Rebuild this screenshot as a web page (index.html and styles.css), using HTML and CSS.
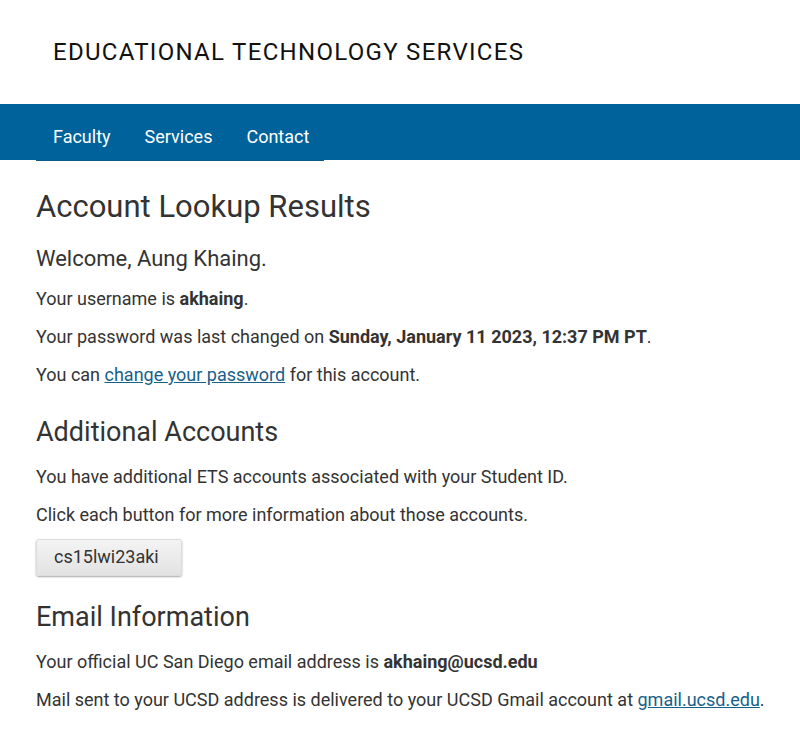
FILE: index.html
```html
<!DOCTYPE html>
<html>
<head>
<meta charset="utf-8">
<link rel="stylesheet" href="styles.css">
</head>
<body>
<header class="site-header">
  <div class="site-title">EDUCATIONAL TECHNOLOGY SERVICES</div>
</header>
<nav class="main-nav">
  <ul class="nav-list">
    <li><a href="#">Faculty</a></li>
    <li><a href="#">Services</a></li>
    <li><a href="#">Contact</a></li>
  </ul>
</nav>
<main class="content">
  <h1>Account Lookup Results</h1>
  <h3 class="welcome">Welcome, Aung Khaing.</h3>
  <p>Your username is <strong>akhaing</strong>.</p>
  <p>Your password was last changed on <strong>Sunday, January 11 2023, 12:37 PM PT</strong>.</p>
  <p>You can <a href="#">change your password</a> for this account.</p>
  <h2>Additional Accounts</h2>
  <p>You have additional ETS accounts associated with your Student ID.</p>
  <p>Click each button for more information about those accounts.</p>
  <button class="acct-btn">cs15lwi23aki</button>
  <h2 class="after-btn">Email Information</h2>
  <p>Your official UC San Diego email address is <strong>akhaing@ucsd.edu</strong></p>
  <p>Mail sent to your UCSD address is delivered to your UCSD Gmail account at <a href="#">gmail.ucsd.edu</a>.</p>
</main>
</body>
</html>
```
FILE: styles.css
```css
html, body {
  margin: 0;
  padding: 0;
  background: #fff;
}
body {
  font-family: Roboto, "Liberation Sans", sans-serif;
  color: #333;
  font-size: 18px;
}
.site-header {
  height: 104px;
  display: flex;
  align-items: center;
  padding-left: 53px;
}
.site-title {
  font-size: 24px;
  letter-spacing: 1.3px;
  color: #111;
}
.main-nav {
  background: #00629b;
  height: 56px;
}
.nav-list {
  list-style: none;
  margin: 0 0 0 36px;
  padding: 0;
  display: flex;
  height: 56px;
  width: 288px;
  border-bottom: 1px solid #0b5a86;
}
.nav-list li a {
  display: block;
  padding: 10px 17px 0;
  line-height: 46px;
  color: #fff;
  font-size: 18px;
  text-decoration: none;
}
.content {
  padding: 0 0 0 36px;
}
h1 {
  font-size: 31px;
  font-weight: 400;
  margin: 27px 0 0;
  line-height: 40px;
}
.welcome {
  font-size: 22px;
  font-weight: 400;
  margin: 18px 0 0;
  line-height: 28px;
}
p {
  margin: 10px 0 0;
  line-height: 28px;
}
.welcome + p {
  margin-top: 12px;
}
h2 + p {
  margin-top: 13px;
}
strong {
  font-weight: 700;
}
a {
  color: #176188;
}
h2 {
  font-size: 27px;
  font-weight: 400;
  margin: 25px 0 0;
  line-height: 36px;
}
h2.after-btn {
  margin-top: 23px;
}
.acct-btn {
  display: block;
  margin-top: 10px;
  width: 146px;
  height: 37px;
  font-family: Roboto, "Liberation Sans", sans-serif;
  font-size: 18px;
  color: #333;
  text-align: left;
  border: 1px solid #dcdcdc;
  border-radius: 3px;
  background: linear-gradient(#f4f4f4, #e2e2e2);
  box-shadow: 0 1px 2px rgba(0,0,0,0.35);
  padding: 0 0 3px 17px;
}
```
